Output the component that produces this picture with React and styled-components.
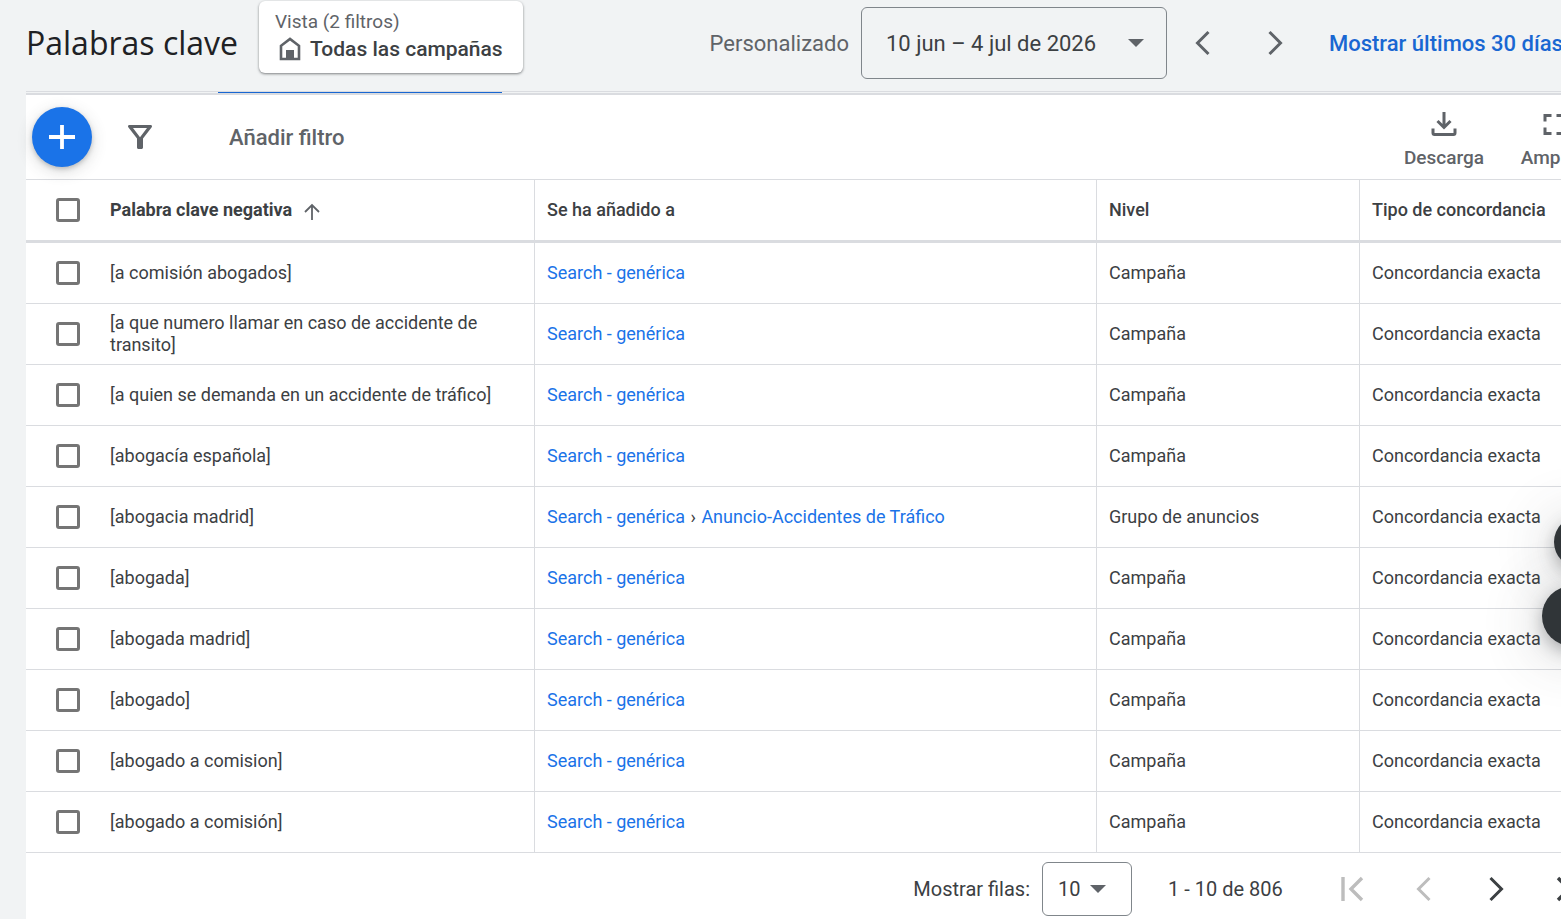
import styled, { createGlobalStyle } from "styled-components";

const GlobalStyle = createGlobalStyle`
  * {
    box-sizing: border-box;
  }
  html,
  body {
    margin: 0;
    min-height: 100vh;
    background: #f1f3f4;
    overflow: hidden;
  }
  body,
  button,
  select {
    font-family: Roboto, "Noto Sans", sans-serif;
    font-size: 18px;
    color: #3c4043;
  }
  button {
    padding: 0;
    border: 0;
    background: none;
    cursor: pointer;
  }
  svg {
    display: block;
    flex: none;
  }
`;

const Page = styled.div`
  min-height: 100vh;
  padding-left: 26px;
  display: flex;
  flex-direction: column;
  overflow: hidden;
`;

const Header = styled.header`
  height: 91px;
  display: flex;
  align-items: flex-start;
  white-space: nowrap;
`;

const Title = styled.h1`
  width: 233px;
  margin: 0;
  font-family: "Open Sans", sans-serif;
  font-size: 32px;
  font-weight: 400;
  line-height: 86px;
  color: #202124;
`;

const ViewCard = styled.button`
  width: 264px;
  height: 72px;
  margin-top: 1px;
  padding: 0 16px 2px;
  display: flex;
  flex-direction: column;
  align-items: flex-start;
  justify-content: center;
  background: #fff;
  border-radius: 6px;
  box-shadow: 0 1px 3px rgba(60, 64, 67, 0.4), 0 1px 2px rgba(60, 64, 67, 0.3);
`;

const ViewLabel = styled.span`
  font-size: 19px;
  line-height: 26px;
  color: #5f6368;
`;

const ViewName = styled.span`
  padding-left: 4px;
  display: flex;
  align-items: center;
  gap: 9px;
  font-size: 21px;
  font-weight: 500;
  line-height: 28px;
`;

const DateGroup = styled.div`
  height: 86px;
  margin-left: auto;
  display: flex;
  align-items: center;
`;

const DateLabel = styled.span`
  margin-right: 12px;
  font-size: 22px;
  color: #5f6368;
`;

const DateButton = styled.button`
  width: 306px;
  height: 72px;
  padding: 0 22px 0 24px;
  display: flex;
  align-items: center;
  justify-content: space-between;
  font-size: 22px;
  border: 1px solid #80868b;
  border-radius: 6px;
`;

const IconButton = styled.button`
  width: 72px;
  height: 48px;
  flex: none;
  display: flex;
  align-items: center;
  justify-content: center;
  color: ${(props) => props.$color || "#5f6368"};
`;

const RangeLink = styled.a`
  width: 232px;
  margin-left: 18px;
  font-size: 22px;
  font-weight: 500;
  color: #1967d2;
  text-decoration: none;
`;

const TabLine = styled.div`
  height: 4px;
  padding-left: 192px;
  border-top: 1px solid #dadce0;
  border-bottom: 2px solid #dadce0;
`;

const TabMarker = styled.div`
  width: 284px;
  height: 1px;
  background: #1967d2;
`;

const Panel = styled.main`
  flex: 1;
  background: #fff;
`;

const Toolbar = styled.div`
  height: 84px;
  padding-left: 6px;
  display: flex;
  align-items: center;
`;

const AddButton = styled.button`
  width: 60px;
  height: 60px;
  display: flex;
  align-items: center;
  justify-content: center;
  color: #fff;
  background: #1a73e8;
  border-radius: 50%;
  box-shadow: 0 2px 4px rgba(60, 64, 67, 0.25), 0 4px 16px rgba(60, 64, 67, 0.2);
`;

const FilterButton = styled(IconButton)`
  width: 96px;
`;

const AddFilter = styled.button`
  margin-left: 41px;
  font-size: 22px;
  font-weight: 500;
  color: #5f6368;
`;

const Tools = styled.div`
  width: 172px;
  margin-left: auto;
  padding-top: 8px;
  display: flex;
`;

const Tool = styled.button`
  width: 110px;
  flex: none;
  display: flex;
  flex-direction: column;
  align-items: center;
  gap: 10px;
  font-size: 19px;
  font-weight: 500;
  line-height: 24px;
  color: #5f6368;
`;

const Table = styled.table`
  width: 100%;
  table-layout: fixed;
  border-collapse: separate;
  border-spacing: 0;
  border-top: 1px solid #dadce0;
`;

const Col = styled.col`
  width: ${(props) => props.$width};
`;

const HeadCell = styled.th`
  height: 63px;
  padding: 0 12px;
  text-align: left;
  font-weight: 500;
  line-height: 22px;
  white-space: nowrap;
  border-bottom: 3px solid #dadce0;
  border-left: ${(props) => (props.$divided ? "1px solid #dadce0" : "0")};
`;

const Cell = styled.td`
  height: 61px;
  padding: 0 12px;
  line-height: 22px;
  border-bottom: 1px solid #dadce0;
  border-left: ${(props) => (props.$divided ? "1px solid #dadce0" : "0")};
`;

const CheckBox = styled.input`
  appearance: none;
  display: block;
  width: 24px;
  height: 24px;
  margin: 0 0 0 18px;
  border: 3px solid #757575;
  border-radius: 3px;
  background: #fff;
`;

const KeywordCell = styled(Cell)`
  padding: 0 12px 0 0;
`;

const KeywordHead = styled(HeadCell)`
  padding: 0;
`;

const SortLabel = styled.span`
  display: flex;
  align-items: center;
  gap: 12px;
  font-weight: 700;
`;

const CellLink = styled.a`
  color: #1a73e8;
  text-decoration: none;
`;

const Separator = styled.span`
  padding: 0 1px;
`;

const Footer = styled.footer`
  height: 72px;
  display: flex;
  align-items: center;
  justify-content: flex-end;
  white-space: nowrap;
  font-size: 20px;
`;

const RowsLabel = styled.label`
  display: flex;
  align-items: center;
  gap: 12px;
`;

const SelectBox = styled.span`
  width: 90px;
  height: 54px;
  display: grid;
  align-items: center;
  > * {
    grid-area: 1 / 1;
  }
  svg {
    margin-left: 48px;
    pointer-events: none;
  }
`;

const RowsSelect = styled.select`
  appearance: none;
  width: 100%;
  height: 100%;
  padding: 0 15px;
  font-size: 20px;
  background: #fff;
  border: 1px solid #80868b;
  border-radius: 6px;
`;

const RangeText = styled.span`
  width: 148px;
  margin-left: 36px;
`;

const Pager = styled.nav`
  width: 245px;
  display: flex;
`;

const FloatButton = styled.button`
  position: fixed;
  top: ${(props) => props.$top};
  right: ${(props) => props.$right};
  width: ${(props) => props.$size};
  height: ${(props) => props.$size};
  border-radius: 50%;
  background: #303538;
  box-shadow: 0 6px 16px rgba(60, 64, 67, 0.35), 0 6px 60px rgba(60, 64, 67, 0.3);
`;

const HomeIcon = () => (
  <svg width="22" height="24" viewBox="0 0 22 24" fill="none">
    <path d="M2 22V8.8l9-6.9 9 6.9V22z" stroke="#5f6368" strokeWidth="2.6" />
    <path d="M7 13h8v10H7z" fill="#5f6368" />
  </svg>
);

const CaretIcon = () => (
  <svg width="16" height="8" viewBox="0 0 16 8">
    <path d="M0 0h16L8 8z" fill="#5f6368" />
  </svg>
);

const ChevronIcon = ({ next }) => (
  <svg width="16" height="26" viewBox="0 0 16 26" fill="none" stroke="currentColor" strokeWidth="3">
    <path d={next ? "M2.500 2l11 11-11 11" : "M13.500 2l-11 11 11 11"} />
  </svg>
);

const EdgeIcon = ({ last }) => (
  <svg width="24" height="26" viewBox="0 0 24 26" fill="none" stroke="currentColor" strokeWidth="3.400">
    <path d={last ? "M2 2l11 11L2 24M22 1v24" : "M22 2L11 13l11 11M3 1v24"} />
  </svg>
);

const PlusIcon = () => (
  <svg width="26" height="26" viewBox="0 0 26 26" fill="none" stroke="currentColor" strokeWidth="3.8">
    <path d="M13 1v24M0 13h26" />
  </svg>
);

const FilterIcon = () => (
  <svg width="24" height="24" viewBox="0 0 24 24" fill="currentColor" fillRule="evenodd">
    <path d="M1.400 0h21.200c1.200 0 1.800 1.300 1.100 2.200L15 13.600v8.900c0 .8-.7 1.500-1.500 1.500h-3c-.8 0-1.500-.7-1.500-1.500v-8.900L.3 2.200C-.4 1.300.2 0 1.400 0zM5 3l7 9.200L19 3z" />
  </svg>
);

const SortIcon = () => (
  <svg width="16" height="20" viewBox="0 0 16 20" fill="none" stroke="#5f6368" strokeWidth="1.8">
    <path d="M8 20V5.500M1 12l7-7 7 7" />
  </svg>
);

const DownloadIcon = () => (
  <svg width="26" height="24" viewBox="0 0 26 24" fill="none" stroke="currentColor" strokeWidth="3">
    <path d="M13 0v15M6.500 9l6.500 6.500L19.500 9M2 16.500v4.500q0 1.500 1.500 1.500h19q1.500 0 1.500-1.500v-4.500" />
  </svg>
);

const ExpandIcon = () => (
  <svg width="24" height="24" viewBox="0 0 24 24" fill="none" stroke="currentColor" strokeWidth="3">
    <path d="M3 9.500v-6h6.500M14.500 3.500H21v6M3 15.500v6h6.500M14.500 21.500H21v-6" />
  </svg>
);

const campaign = "Search - genérica";

const rows = [
  { keyword: "[a comisión abogados]" },
  { keyword: "[a que numero llamar en caso de accidente de transito]" },
  { keyword: "[a quien se demanda en un accidente de tráfico]" },
  { keyword: "[abogacía española]" },
  { keyword: "[abogacia madrid]", group: "Anuncio-Accidentes de Tráfico" },
  { keyword: "[abogada]" },
  { keyword: "[abogada madrid]" },
  { keyword: "[abogado]" },
  { keyword: "[abogado a comision]" },
  { keyword: "[abogado a comisión]" },
];

function PageHeader() {
  return (
    <Header>
      <Title>Palabras clave</Title>
      <ViewCard>
        <ViewLabel>Vista (2 filtros)</ViewLabel>
        <ViewName>
          <HomeIcon />
          Todas las campañas
        </ViewName>
      </ViewCard>
      <DateGroup>
        <DateLabel>Personalizado</DateLabel>
        <DateButton>
          10 jun – 4 jul de 2026
          <CaretIcon />
        </DateButton>
        <IconButton aria-label="Periodo anterior">
          <ChevronIcon />
        </IconButton>
        <IconButton aria-label="Periodo siguiente">
          <ChevronIcon next />
        </IconButton>
        <RangeLink href="#">Mostrar últimos 30 días</RangeLink>
      </DateGroup>
    </Header>
  );
}

function KeywordTable() {
  return (
    <Table>
      <colgroup>
        <Col $width="84px" />
        <Col $width="424px" />
        <Col $width="562px" />
        <Col $width="263px" />
        <Col />
      </colgroup>
      <thead>
        <tr>
          <HeadCell>
            <CheckBox type="checkbox" aria-label="Seleccionar todo" />
          </HeadCell>
          <KeywordHead>
            <SortLabel>
              Palabra clave negativa
              <SortIcon />
            </SortLabel>
          </KeywordHead>
          <HeadCell $divided>Se ha añadido a</HeadCell>
          <HeadCell $divided>Nivel</HeadCell>
          <HeadCell $divided>Tipo de concordancia</HeadCell>
        </tr>
      </thead>
      <tbody>
        {rows.map(({ keyword, group }) => (
          <tr key={keyword}>
            <Cell>
              <CheckBox type="checkbox" aria-label={keyword} />
            </Cell>
            <KeywordCell>{keyword}</KeywordCell>
            <Cell $divided>
              <CellLink href="#">{campaign}</CellLink>
              {group && (
                <>
                  <Separator> › </Separator>
                  <CellLink href="#">{group}</CellLink>
                </>
              )}
            </Cell>
            <Cell $divided>{group ? "Grupo de anuncios" : "Campaña"}</Cell>
            <Cell $divided>Concordancia exacta</Cell>
          </tr>
        ))}
      </tbody>
    </Table>
  );
}

function TableFooter() {
  return (
    <Footer>
      <RowsLabel>
        Mostrar filas:
        <SelectBox>
          <RowsSelect defaultValue="10">
            <option>10</option>
            <option>30</option>
            <option>50</option>
          </RowsSelect>
          <CaretIcon />
        </SelectBox>
      </RowsLabel>
      <RangeText>1 - 10 de 806</RangeText>
      <Pager>
        <IconButton $color="#bdbdbd" aria-label="Primera página">
          <EdgeIcon />
        </IconButton>
        <IconButton $color="#bdbdbd" aria-label="Página anterior">
          <ChevronIcon />
        </IconButton>
        <IconButton $color="#3c4043" aria-label="Página siguiente">
          <ChevronIcon next />
        </IconButton>
        <IconButton $color="#3c4043" aria-label="Última página">
          <EdgeIcon last />
        </IconButton>
      </Pager>
    </Footer>
  );
}

export default function App() {
  return (
    <Page>
      <GlobalStyle />
      <PageHeader />
      <TabLine>
        <TabMarker />
      </TabLine>
      <Panel>
        <Toolbar>
          <AddButton aria-label="Añadir">
            <PlusIcon />
          </AddButton>
          <FilterButton aria-label="Filtrar">
            <FilterIcon />
          </FilterButton>
          <AddFilter>Añadir filtro</AddFilter>
          <Tools>
            <Tool>
              <DownloadIcon />
              Descarga
            </Tool>
            <Tool>
              <ExpandIcon />
              Ampliar
            </Tool>
          </Tools>
        </Toolbar>
        <KeywordTable />
        <TableFooter />
      </Panel>
      <FloatButton $top="516px" $right="-45px" $size="52px" aria-label="Ayuda" />
      <FloatButton $top="586px" $right="-41px" $size="60px" aria-label="Comentarios" />
    </Page>
  );
}
